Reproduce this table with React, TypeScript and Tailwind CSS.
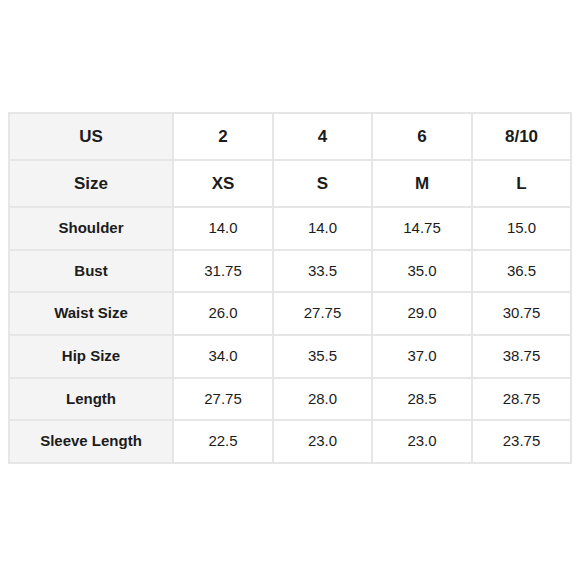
const header = [
  ["US", "2", "4", "6", "8/10"],
  ["Size", "XS", "S", "M", "L"],
];

const rows = [
  ["Shoulder", "14.0", "14.0", "14.75", "15.0"],
  ["Bust", "31.75", "33.5", "35.0", "36.5"],
  ["Waist Size", "26.0", "27.75", "29.0", "30.75"],
  ["Hip Size", "34.0", "35.5", "37.0", "38.75"],
  ["Length", "27.75", "28.0", "28.5", "28.75"],
  ["Sleeve Length", "22.5", "23.0", "23.0", "23.75"],
];

export default function App() {
  return (
    <div className="w-[580px] h-[580px] bg-white pt-[112px] pl-[8px] font-['Liberation_Sans',Arial,sans-serif] text-[#1c1c1c]">
      <div className="grid w-[564px] grid-cols-[162px_98px_97px_98px_97px] grid-rows-[45px_45px_41px_40px_41px_41px_40px_41px] gap-[2px] bg-[#e6e6e6] p-[2px]">
        {header.map((row) =>
          row.map((cell, i) => (
            <div
              key={row[0] + i}
              className={`flex items-center justify-center text-[17px] font-bold ${
                i === 0 ? "bg-[#f4f4f4]" : "bg-white"
              }`}
            >
              {cell}
            </div>
          ))
        )}
        {rows.map((row) =>
          row.map((cell, i) =>
            i === 0 ? (
              <div
                key={row[0] + i}
                className="flex items-center justify-center bg-[#f4f4f4] text-[15px] font-bold"
              >
                {cell}
              </div>
            ) : (
              <div
                key={row[0] + i}
                className="flex items-center justify-center bg-white text-[15px]"
              >
                {cell}
              </div>
            )
          )
        )}
      </div>
    </div>
  );
}
